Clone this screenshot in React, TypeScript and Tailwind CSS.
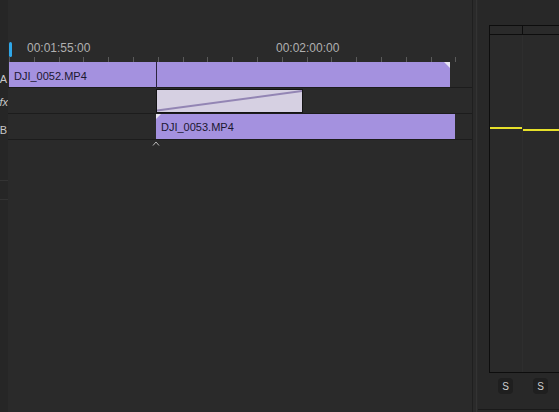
import React from "react";

const ticks = Array.from({ length: 19 }, (_, i) => i);

function Ruler() {
    return (
        <div className="relative h-[22px] shrink-0">
            <span className="absolute left-[19px] top-[2px] text-[12px] leading-none text-[#b0b0b0]">00:01:55:00</span>
            <span className="absolute left-[268px] top-[2px] text-[12px] leading-none text-[#b0b0b0]">00:02:00:00</span>
            {ticks.map((i) => (
                <div key={i} className="absolute bottom-0 h-[5px] w-px bg-[#5a5a5a]" style={{left: 1 + i * 24.8}}/>
            ))}
            {/* playhead handle */}
            <div className="absolute left-[1px] top-[2px] h-[15px] w-[3px] rounded-sm bg-[#2fa7e8]"/>
        </div>
    );
}

function Track({children}: { children?: React.ReactNode }) {
    return (
        <div className="relative h-[26px] border-b border-[#1c1c1c]">
            {children}
        </div>
    );
}

export default function App() {
    return (
        <div className="flex h-[412px] w-[559px] overflow-hidden bg-[#2a2a2a] font-['Liberation_Sans',Arial,sans-serif]">
            {/* track header strip, mostly clipped */}
            <div className="flex w-[8px] shrink-0 flex-col overflow-hidden bg-[#262626] text-[11px] text-[#c8c8c8]">
                <div className="h-[62px] shrink-0"/>
                <div className="flex h-[26px] items-center justify-end pr-px pt-[9px]">A</div>
                <div className="flex h-[26px] items-center justify-end pt-[3px] italic">fx</div>
                <div className="flex h-[26px] items-center justify-end pr-px pt-[6px]">B</div>
                <div className="mt-[40px] h-px bg-[#333]"/>
                <div className="mt-[18px] h-px bg-[#333]"/>
            </div>

            {/* timeline */}
            <div className="relative flex w-[464px] shrink-0 flex-col">
                <div className="h-[40px] shrink-0"/>
                <Ruler/>
                <Track>
                    <div
                        className="absolute inset-y-0 left-[1px] w-[441px] bg-[#a491df] pl-[5px] pt-[6px] text-[11px] text-[#1b1730]">
                        DJI_0052.MP4
                    </div>
                    <div className="absolute left-[148px] top-0 h-[26px] w-px bg-[#2c2540]"/>
                    <svg className="absolute left-[434px] top-0" width="8" height="8" viewBox="0 0 8 8">
                        <path d="M2 0 H8 V6 Z" fill="#e8e4f2"/>
                    </svg>
                </Track>
                <Track>
                    <div className="absolute left-[148px] top-[1px] h-[24px] w-[147px] border border-[#141414] bg-[#d6d0e2]">
                        <svg className="absolute inset-0" width="145" height="22" viewBox="0 0 145 22">
                            <line x1="0" y1="20.5" x2="145" y2="1" stroke="#9385b4" strokeWidth="2"/>
                        </svg>
                    </div>
                </Track>
                <Track>
                    <div
                        className="absolute inset-y-0 left-[148px] w-[299px] bg-[#a491df] pl-[5px] pt-[5px] text-[11px] text-[#1b1730]">
                        DJI_0053.MP4
                    </div>
                    <svg className="absolute left-[148px] top-0" width="5" height="5" viewBox="0 0 5 5">
                        <path d="M0 0 H5 L0 5 Z" fill="#e8e4f2"/>
                    </svg>
                </Track>
                <div className="relative h-[10px]">
                    <svg className="absolute left-[144px] top-[1px]" width="8" height="5" viewBox="0 0 8 5">
                        <path d="M1 4.5 L4 1 L7 4.5" fill="none" stroke="#b8b8b8" strokeWidth="1"/>
                    </svg>
                </div>
            </div>

            {/* panel divider */}
            <div className="flex w-[6px] shrink-0">
                <div className="w-px bg-[#1f1f1f]"/>
                <div className="w-[3px]"/>
                <div className="w-px bg-[#333]"/>
            </div>

            {/* audio meters */}
            <div className="flex flex-1 flex-col bg-[#282828]">
                <div className="flex flex-1 flex-col pl-[11px] pt-[25px]">
                    <div className="flex h-[348px] w-[80px] flex-col border border-[#0d0d0d] bg-[#2a2a2a]">
                        <div className="flex h-[9px] border-b border-[#0d0d0d]">
                            <div className="w-[33px] border-r border-[#0d0d0d]"/>
                            <div className="flex-1"/>
                        </div>
                        <div className="flex flex-1">
                            <div className="w-[33px] border-r border-[#2e2e2e] pt-[92px]">
                                <div className="h-[2px] bg-[#e6e02a]"/>
                            </div>
                            <div className="flex-1 pt-[94px]">
                                <div className="h-[2px] bg-[#e6e02a]"/>
                            </div>
                        </div>
                    </div>
                    <div className="flex gap-[20px] pl-[9px] pt-[5px]">
                        <div
                            className="flex h-[16px] w-[15px] items-center justify-center rounded-sm bg-[#1f1f1f] text-[10px] text-[#d0d0d0]">S
                        </div>
                        <div
                            className="flex h-[16px] w-[15px] items-center justify-center rounded-sm bg-[#1f1f1f] text-[10px] text-[#d0d0d0]">S
                        </div>
                    </div>
                </div>
                <div className="mb-[2px] h-px bg-[#1a1a1a]"/>
            </div>
        </div>
    );
}
